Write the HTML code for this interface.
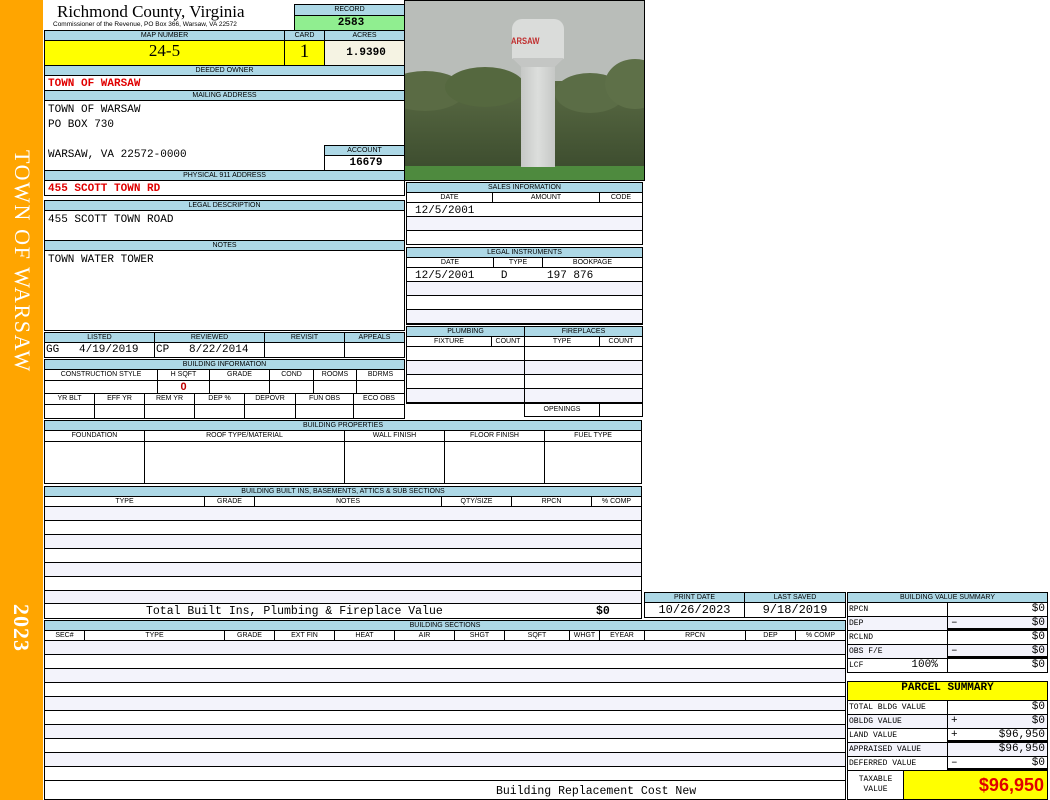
<!DOCTYPE html>
<html><head><meta charset="utf-8"><style>
*{margin:0;padding:0}
body{width:1050px;height:800px;background:#fff;position:relative;overflow:hidden;font-family:"Liberation Sans",sans-serif}
.c{position:absolute;box-sizing:border-box;border:1px solid #000;font-size:7px;text-align:center;overflow:hidden;white-space:nowrap;background:#fff}
.h{background:#add8e6}
.m{font-family:"Liberation Mono",monospace;font-size:11px;text-align:left;padding-left:3px}
.r{color:#e00000;font-weight:bold}
.lt{background:#f3f3fb}
.sb{font-family:"Liberation Mono",monospace;font-size:8px;text-align:left;padding-left:1px}
.v{font-family:"Liberation Mono",monospace;font-size:11px;text-align:right;padding-right:2px}
</style></head><body>
<div style="position:absolute;left:0;top:0;width:43px;height:800px;background:#ffa500"></div>
<div style="position:absolute;left:23px;top:150px;transform-origin:0 0;transform:rotate(90deg) translate(0,-12px);color:#fff;font:22px 'Liberation Serif',serif;white-space:nowrap;letter-spacing:1.6px">TOWN OF WARSAW</div>
<div style="position:absolute;left:34px;top:604px;transform-origin:0 0;transform:rotate(90deg);color:#fff;font:bold 22px 'Liberation Serif',serif;white-space:nowrap;letter-spacing:1px">2023</div>

<div style="position:absolute;left:57px;top:2px;font:17px 'Liberation Serif',serif">Richmond County, Virginia</div>
<div style="position:absolute;left:53px;top:21px;font-size:6.5px">Commissioner of the Revenue, PO Box 366, Warsaw, VA 22572</div>
<div class="c h" style="left:294px;top:4px;width:111px;height:12px;line-height:10px">RECORD</div>
<div class="c m" style="left:294px;top:15px;width:111px;height:16px;line-height:14px;background:#90ee90;text-align:center;font-weight:bold">2583</div>

<div class="c h" style="left:44px;top:30px;width:241px;height:11px;line-height:9px">MAP NUMBER</div>
<div class="c h" style="left:284px;top:30px;width:41px;height:11px;line-height:9px">CARD</div>
<div class="c h" style="left:324px;top:30px;width:81px;height:11px;line-height:9px">ACRES</div>
<div class="c" style="left:44px;top:40px;width:241px;height:26px;line-height:26px;background:#ffff00;font:17px 'Liberation Serif',serif">24-5</div>
<div class="c" style="left:284px;top:40px;width:41px;height:26px;line-height:26px;background:#ffff00;font:19px 'Liberation Serif',serif">1</div>
<div class="c m" style="left:324px;top:40px;width:81px;height:26px;line-height:24px;background:#f5f3e3;text-align:center;font-weight:bold">1.9390</div>

<div class="c h" style="left:44px;top:65px;width:361px;height:11px;line-height:9px">DEEDED OWNER</div>
<div class="c m r" style="left:44px;top:75px;width:361px;height:16px;line-height:16px">TOWN OF WARSAW</div>
<div class="c h" style="left:44px;top:90px;width:361px;height:11px;line-height:9px">MAILING ADDRESS</div>
<div class="c m" style="left:44px;top:100px;width:361px;height:71px;line-height:15px;white-space:pre;padding-top:2px">TOWN OF WARSAW
PO BOX 730

WARSAW, VA 22572-0000</div>
<div class="c h" style="left:324px;top:145px;width:81px;height:11px;line-height:9px">ACCOUNT</div>
<div class="c m" style="left:324px;top:155px;width:81px;height:16px;line-height:15px;text-align:center;font-weight:bold">16679</div>
<div class="c h" style="left:44px;top:170px;width:361px;height:11px;line-height:9px">PHYSICAL 911 ADDRESS</div>
<div class="c m r" style="left:44px;top:180px;width:361px;height:16px;line-height:16px">455 SCOTT TOWN RD</div>

<div class="c h" style="left:44px;top:200px;width:361px;height:11px;line-height:9px">LEGAL DESCRIPTION</div>
<div class="c m" style="left:44px;top:210px;width:361px;height:31px;line-height:17px;padding-top:1px">455 SCOTT TOWN ROAD</div>
<div class="c h" style="left:44px;top:240px;width:361px;height:11px;line-height:9px">NOTES</div>
<div class="c m" style="left:44px;top:250px;width:361px;height:81px;line-height:17px;padding-top:1px">TOWN WATER TOWER</div>

<!-- photo -->
<div style="position:absolute;left:404px;top:0;width:241px;height:181px;border:1px solid #000;box-sizing:border-box;overflow:hidden;background:#b9bdb9">
 <div style="position:absolute;left:0;top:80px;width:241px;height:90px;background:linear-gradient(#5a6b44,#3c4c2e)"></div>
 <div style="position:absolute;left:-20px;top:70px;width:80px;height:40px;border-radius:50%;background:#5a6b44"></div>
 <div style="position:absolute;left:40px;top:66px;width:80px;height:40px;border-radius:50%;background:#55683f"></div>
 <div style="position:absolute;left:150px;top:72px;width:70px;height:40px;border-radius:50%;background:#5b6d46"></div>
 <div style="position:absolute;left:200px;top:58px;width:60px;height:50px;border-radius:50%;background:#5e7048"></div>
 <div style="position:absolute;left:0;top:165px;width:241px;height:16px;background:#4e8a3e"></div>
 <div style="position:absolute;left:116px;top:64px;width:34px;height:102px;background:linear-gradient(90deg,#c6c8c6,#dcdedc,#c6c8c6)"></div>
 <div style="position:absolute;left:107px;top:18px;width:52px;height:40px;background:#dadcda;border-radius:10px 10px 0 0"></div>
 <div style="position:absolute;left:107px;top:57px;width:52px;height:9px;background:#c4c6c4;clip-path:polygon(0 0,100% 0,82% 100%,18% 100%)"></div>
 <div style="position:absolute;left:106px;top:35px;color:#c03030;font:bold 9px 'Liberation Sans',sans-serif;transform:scaleX(0.85);transform-origin:0 0">ARSAW</div>
</div>

<!-- sales -->
<div class="c h" style="left:406px;top:182px;width:237px;height:11px;line-height:9px">SALES INFORMATION</div>
<div class="c" style="left:406px;top:192px;width:87px;height:11px;line-height:9px">DATE</div>
<div class="c" style="left:492px;top:192px;width:108px;height:11px;line-height:9px">AMOUNT</div>
<div class="c" style="left:599px;top:192px;width:44px;height:11px;line-height:9px">CODE</div>
<div class="c m" style="left:406px;top:202px;width:237px;height:43px;background:repeating-linear-gradient(#fff 0 13px,#000 13px 14px,#f3f3fb 14px 27px,#000 27px 28px);line-height:16px;padding-left:8px">12/5/2001</div>
<div class="c h" style="left:406px;top:247px;width:237px;height:11px;line-height:9px">LEGAL INSTRUMENTS</div>
<div class="c" style="left:406px;top:257px;width:88px;height:11px;line-height:9px">DATE</div>
<div class="c" style="left:493px;top:257px;width:50px;height:11px;line-height:9px">TYPE</div>
<div class="c" style="left:542px;top:257px;width:101px;height:11px;line-height:9px">BOOKPAGE</div>
<div class="c m" style="left:406px;top:267px;width:237px;height:58px;background:repeating-linear-gradient(#fff 0 13px,#000 13px 14px,#f3f3fb 14px 27px,#000 27px 28px);line-height:16px;padding-left:8px;white-space:pre">12/5/2001    D      197 876</div>

<!-- plumbing -->
<div class="c h" style="left:406px;top:326px;width:119px;height:11px;line-height:9px">PLUMBING</div>
<div class="c h" style="left:524px;top:326px;width:119px;height:11px;line-height:9px">FIREPLACES</div>
<div class="c" style="left:406px;top:336px;width:86px;height:11px;line-height:9px">FIXTURE</div>
<div class="c" style="left:491px;top:336px;width:34px;height:11px;line-height:9px">COUNT</div>
<div class="c" style="left:524px;top:336px;width:76px;height:11px;line-height:9px">TYPE</div>
<div class="c" style="left:599px;top:336px;width:44px;height:11px;line-height:9px">COUNT</div>
<div class="c" style="left:406px;top:346px;width:119px;height:58px;background:repeating-linear-gradient(#fff 0 13px,#000 13px 14px,#f3f3fb 14px 27px,#000 27px 28px)"></div>
<div class="c" style="left:524px;top:346px;width:119px;height:58px;background:repeating-linear-gradient(#fff 0 13px,#000 13px 14px,#f3f3fb 14px 27px,#000 27px 28px)"></div>
<div class="c" style="left:524px;top:403px;width:76px;height:14px;line-height:12px">OPENINGS</div>
<div class="c" style="left:599px;top:403px;width:44px;height:14px"></div>

<!-- listed -->
<div class="c h" style="left:44px;top:332px;width:111px;height:11px;line-height:9px">LISTED</div>
<div class="c h" style="left:154px;top:332px;width:111px;height:11px;line-height:9px">REVIEWED</div>
<div class="c h" style="left:264px;top:332px;width:81px;height:11px;line-height:9px">REVISIT</div>
<div class="c h" style="left:344px;top:332px;width:61px;height:11px;line-height:9px">APPEALS</div>
<div class="c m" style="left:44px;top:342px;width:111px;height:16px;line-height:15px;padding-left:1px;white-space:pre">GG   4/19/2019</div>
<div class="c m" style="left:154px;top:342px;width:111px;height:16px;line-height:15px;padding-left:1px;white-space:pre">CP   8/22/2014</div>
<div class="c" style="left:264px;top:342px;width:81px;height:16px"></div>
<div class="c" style="left:344px;top:342px;width:61px;height:16px"></div>

<!-- building info -->
<div class="c h" style="left:44px;top:359px;width:361px;height:11px;line-height:9px">BUILDING INFORMATION</div>
<div class="c" style="left:44px;top:369px;width:114px;height:12px;line-height:10px">CONSTRUCTION STYLE</div>
<div class="c" style="left:157px;top:369px;width:53px;height:12px;line-height:10px">H SQFT</div>
<div class="c" style="left:209px;top:369px;width:61px;height:12px;line-height:10px">GRADE</div>
<div class="c" style="left:269px;top:369px;width:45px;height:12px;line-height:10px">COND</div>
<div class="c" style="left:313px;top:369px;width:44px;height:12px;line-height:10px">ROOMS</div>
<div class="c" style="left:356px;top:369px;width:49px;height:12px;line-height:10px">BDRMS</div>
<div class="c" style="left:44px;top:380px;width:114px;height:14px"></div>
<div class="c" style="left:157px;top:380px;width:53px;height:14px;line-height:13px;color:#c00000;font-weight:bold;font-size:11px">0</div>
<div class="c" style="left:209px;top:380px;width:61px;height:14px"></div>
<div class="c" style="left:269px;top:380px;width:45px;height:14px"></div>
<div class="c" style="left:313px;top:380px;width:44px;height:14px"></div>
<div class="c" style="left:356px;top:380px;width:49px;height:14px"></div>
<div class="c" style="left:44px;top:393px;width:51px;height:12px;line-height:10px">YR BLT</div>
<div class="c" style="left:94px;top:393px;width:51px;height:12px;line-height:10px">EFF YR</div>
<div class="c" style="left:144px;top:393px;width:51px;height:12px;line-height:10px">REM YR</div>
<div class="c" style="left:194px;top:393px;width:51px;height:12px;line-height:10px">DEP %</div>
<div class="c" style="left:244px;top:393px;width:52px;height:12px;line-height:10px">DEPOVR</div>
<div class="c" style="left:295px;top:393px;width:59px;height:12px;line-height:10px">FUN OBS</div>
<div class="c" style="left:353px;top:393px;width:52px;height:12px;line-height:10px">ECO OBS</div>
<div class="c" style="left:44px;top:404px;width:51px;height:15px"></div>
<div class="c" style="left:94px;top:404px;width:51px;height:15px"></div>
<div class="c" style="left:144px;top:404px;width:51px;height:15px"></div>
<div class="c" style="left:194px;top:404px;width:51px;height:15px"></div>
<div class="c" style="left:244px;top:404px;width:52px;height:15px"></div>
<div class="c" style="left:295px;top:404px;width:59px;height:15px"></div>
<div class="c" style="left:353px;top:404px;width:52px;height:15px"></div>

<!-- building properties -->
<div class="c h" style="left:44px;top:420px;width:598px;height:11px;line-height:9px">BUILDING PROPERTIES</div>
<div class="c" style="left:44px;top:430px;width:101px;height:12px;line-height:10px">FOUNDATION</div>
<div class="c" style="left:144px;top:430px;width:201px;height:12px;line-height:10px">ROOF TYPE/MATERIAL</div>
<div class="c" style="left:344px;top:430px;width:101px;height:12px;line-height:10px">WALL FINISH</div>
<div class="c" style="left:444px;top:430px;width:101px;height:12px;line-height:10px">FLOOR FINISH</div>
<div class="c" style="left:544px;top:430px;width:98px;height:12px;line-height:10px">FUEL TYPE</div>
<div class="c" style="left:44px;top:441px;width:101px;height:43px"></div>
<div class="c" style="left:144px;top:441px;width:201px;height:43px"></div>
<div class="c" style="left:344px;top:441px;width:101px;height:43px"></div>
<div class="c" style="left:444px;top:441px;width:101px;height:43px"></div>
<div class="c" style="left:544px;top:441px;width:98px;height:43px"></div>

<!-- built ins -->
<div class="c h" style="left:44px;top:486px;width:598px;height:11px;line-height:9px">BUILDING BUILT INS, BASEMENTS, ATTICS &amp; SUB SECTIONS</div>
<div class="c" style="left:44px;top:496px;width:161px;height:11px;line-height:9px">TYPE</div>
<div class="c" style="left:204px;top:496px;width:51px;height:11px;line-height:9px">GRADE</div>
<div class="c" style="left:254px;top:496px;width:188px;height:11px;line-height:9px">NOTES</div>
<div class="c" style="left:441px;top:496px;width:71px;height:11px;line-height:9px">QTY/SIZE</div>
<div class="c" style="left:511px;top:496px;width:81px;height:11px;line-height:9px">RPCN</div>
<div class="c" style="left:591px;top:496px;width:51px;height:11px;line-height:9px">% COMP</div>
<div class="c" style="left:44px;top:506px;width:598px;height:98px;background:repeating-linear-gradient(#f3f3fb 0 13px,#000 13px 14px,#fff 14px 27px,#000 27px 28px)"></div>
<div class="c" style="left:44px;top:603px;width:598px;height:16px;font:11.5px 'Liberation Mono',monospace;line-height:16px"><span style="position:absolute;left:101px">Total Built Ins, Plumbing &amp; Fireplace Value</span><span style="position:absolute;left:551px;font-weight:bold">$0</span></div>

<!-- print date -->
<div class="c h" style="left:644px;top:592px;width:101px;height:11px;line-height:9px">PRINT DATE</div>
<div class="c h" style="left:744px;top:592px;width:102px;height:11px;line-height:9px">LAST SAVED</div>
<div class="c m" style="left:644px;top:602px;width:101px;height:16px;line-height:15px;text-align:center;padding:0;font-size:12px">10/26/2023</div>
<div class="c m" style="left:744px;top:602px;width:102px;height:16px;line-height:15px;text-align:center;padding:0;font-size:12px">9/18/2019</div>

<!-- building sections -->
<div class="c h" style="left:44px;top:620px;width:802px;height:11px;line-height:9px">BUILDING SECTIONS</div>
<div class="c" style="left:44px;top:630px;width:41px;height:11px;line-height:9px">SEC#</div>
<div class="c" style="left:84px;top:630px;width:141px;height:11px;line-height:9px">TYPE</div>
<div class="c" style="left:224px;top:630px;width:51px;height:11px;line-height:9px">GRADE</div>
<div class="c" style="left:274px;top:630px;width:61px;height:11px;line-height:9px">EXT FIN</div>
<div class="c" style="left:334px;top:630px;width:61px;height:11px;line-height:9px">HEAT</div>
<div class="c" style="left:394px;top:630px;width:61px;height:11px;line-height:9px">AIR</div>
<div class="c" style="left:454px;top:630px;width:51px;height:11px;line-height:9px">SHGT</div>
<div class="c" style="left:504px;top:630px;width:66px;height:11px;line-height:9px">SQFT</div>
<div class="c" style="left:569px;top:630px;width:31px;height:11px;line-height:9px">WHGT</div>
<div class="c" style="left:599px;top:630px;width:46px;height:11px;line-height:9px">EYEAR</div>
<div class="c" style="left:644px;top:630px;width:102px;height:11px;line-height:9px">RPCN</div>
<div class="c" style="left:745px;top:630px;width:51px;height:11px;line-height:9px">DEP</div>
<div class="c" style="left:795px;top:630px;width:51px;height:11px;line-height:9px">% COMP</div>
<div class="c" style="left:44px;top:640px;width:802px;height:141px;background:repeating-linear-gradient(#f3f3fb 0 13px,#000 13px 14px,#fff 14px 27px,#000 27px 28px)"></div>
<div class="c" style="left:44px;top:780px;width:802px;height:20px;font:11.5px 'Liberation Mono',monospace;line-height:22px"><span style="position:absolute;left:451px">Building Replacement Cost New</span></div>

<!-- building value summary -->
<div class="c h" style="left:847px;top:592px;width:201px;height:11px;line-height:9px">BUILDING VALUE SUMMARY</div>
<div class="c sb" style="left:847px;top:602px;width:101px;height:15px;line-height:13px">RPCN</div>
<div class="c v" style="left:947px;top:602px;width:101px;height:15px;line-height:13px">$0</div>
<div class="c sb lt" style="left:847px;top:616px;width:101px;height:15px;line-height:13px">DEP</div>
<div class="c v lt" style="left:947px;top:616px;width:101px;height:15px;line-height:13px;border-bottom:3px solid #000"><span style="position:absolute;left:3px">–</span>$0</div>
<div class="c sb" style="left:847px;top:630px;width:101px;height:15px;line-height:13px">RCLND</div>
<div class="c v" style="left:947px;top:630px;width:101px;height:15px;line-height:13px">$0</div>
<div class="c sb lt" style="left:847px;top:644px;width:101px;height:15px;line-height:13px">OBS F/E</div>
<div class="c v lt" style="left:947px;top:644px;width:101px;height:15px;line-height:13px;border-bottom:3px solid #000"><span style="position:absolute;left:3px">–</span>$0</div>
<div class="c sb" style="left:847px;top:658px;width:101px;height:15px;line-height:13px;white-space:pre">LCF          <span style="font-size:11px">100%</span></div>
<div class="c v" style="left:947px;top:658px;width:101px;height:15px;line-height:13px">$0</div>

<!-- parcel summary -->
<div class="c" style="left:847px;top:681px;width:201px;height:20px;line-height:19px;background:#ffff00;font:bold 11px 'Liberation Mono',monospace">PARCEL SUMMARY</div>
<div class="c sb" style="left:847px;top:700px;width:101px;height:15px;line-height:13px">TOTAL BLDG VALUE</div>
<div class="c v" style="left:947px;top:700px;width:101px;height:15px;line-height:13px">$0</div>
<div class="c sb lt" style="left:847px;top:714px;width:101px;height:15px;line-height:13px">OBLDG VALUE</div>
<div class="c v lt" style="left:947px;top:714px;width:101px;height:15px;line-height:13px"><span style="position:absolute;left:3px">+</span>$0</div>
<div class="c sb" style="left:847px;top:728px;width:101px;height:15px;line-height:13px">LAND VALUE</div>
<div class="c v" style="left:947px;top:728px;width:101px;height:15px;line-height:13px;border-bottom:3px solid #000"><span style="position:absolute;left:3px">+</span>$96,950</div>
<div class="c sb lt" style="left:847px;top:742px;width:101px;height:15px;line-height:13px">APPRAISED VALUE</div>
<div class="c v lt" style="left:947px;top:742px;width:101px;height:15px;line-height:13px">$96,950</div>
<div class="c sb" style="left:847px;top:756px;width:101px;height:15px;line-height:13px">DEFERRED VALUE</div>
<div class="c v" style="left:947px;top:756px;width:101px;height:15px;line-height:13px;border-bottom:3px solid #000"><span style="position:absolute;left:3px">–</span>$0</div>
<div class="c" style="left:847px;top:770px;width:57px;height:30px;font:8px 'Liberation Mono',monospace;line-height:10px;padding-top:4px;white-space:pre">TAXABLE
VALUE</div>
<div class="c" style="left:903px;top:770px;width:145px;height:30px;background:#ffff00;text-align:right;padding-right:3px;color:#e00000;font:bold 18px 'Liberation Sans',sans-serif;line-height:28px">$96,950</div>
</body></html>
